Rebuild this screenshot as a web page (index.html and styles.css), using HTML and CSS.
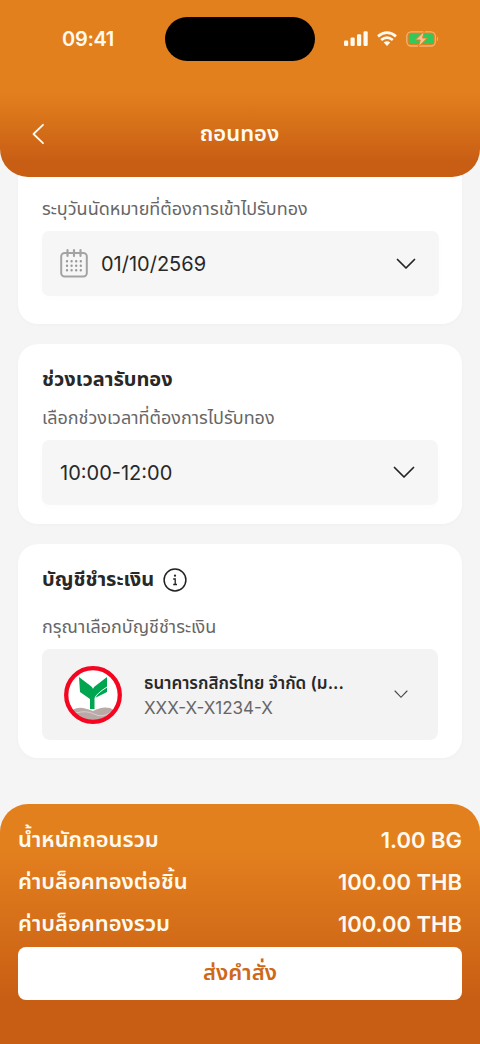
FILE: index.html
```html
<!DOCTYPE html>
<html lang="th">
<head>
<meta charset="utf-8">
<meta name="viewport" content="width=device-width, initial-scale=1">
<title>ถอนทอง</title>
<link rel="stylesheet" href="styles.css">
</head>
<body>
<div class="screen">
  <header class="header">
    <div class="status">
      <span class="clock">09:41</span>
      <div class="island"></div>
      <div class="status-icons">
        <svg width="24" height="16" viewBox="0 0 24 16" fill="#fffaf0"><rect x="0" y="9.5" width="4.2" height="5.5" rx="1.2"/><rect x="6.5" y="6.5" width="4.2" height="8.5" rx="1.2"/><rect x="13" y="3.3" width="4.2" height="11.7" rx="1.2"/><rect x="19.5" y="0.2" width="4.2" height="14.8" rx="1.2"/></svg>
        <svg width="20" height="16" viewBox="0 0 20 16"><g fill="none" stroke="#fffaf0" stroke-width="2.7"><path d="M1 5.4Q10-2.2 19 5.4"/><path d="M4.2 9Q10 4.2 15.8 9"/></g><path d="M6.7 11.6Q10 9 13.3 11.6L10 15Z" fill="#fffaf0"/></svg>
        <svg width="33" height="16" viewBox="0 0 33 16"><rect x=".8" y=".8" width="28.6" height="14.2" rx="4.5" fill="none" stroke="#f2b274" stroke-width="1.3"/><rect x="2.8" y="2.7" width="24.6" height="10.4" rx="2.8" fill="#34c759"/><path d="M31 5.5Q33.2 7.9 31 10.3Z" fill="#f2b274"/><path d="M18.5 0L9.4 9H14.2L12.3 16L21.4 7H16.6Z" fill="#f8c391" stroke="#e3801e" stroke-width="1"/></svg>
      </div>
    </div>
    <div class="nav">
      <svg class="back" width="14" height="22" viewBox="0 0 14 22"><path d="M12 1.8L2.5 11L12 20.2" fill="none" stroke="#fffaf0" stroke-width="1.8" stroke-linecap="round" stroke-linejoin="round"/></svg>
      <h1 class="nav-title"><span class="t-nav">ถอนทอง</span></h1>
    </div>
  </header>

  <main class="content">
    <section class="card">
      <h2 class="title"><span class="t-date">วันที่นัดหมาย</span></h2>
      <p class="hint"><span class="t-date-hint">ระบุวันนัดหมายที่ต้องการเข้าไปรับทอง</span></p>
      <div class="field field-wide">
        <svg class="calendar" width="28" height="29" viewBox="0 0 28 29"><rect x="1.2" y="4" width="25.6" height="23.5" rx="3.5" fill="none" stroke="#a3a3a3" stroke-width="2"/><path d="M7.5 1.2V7M14 1.2V7M20.5 1.2V7" stroke="#a3a3a3" stroke-width="2.2" stroke-linecap="round"/><path d="M7 12.2H22M7 16.7H22M7 21.2H22" stroke="#999" stroke-width="2.4" stroke-linecap="round" stroke-dasharray="0 4.6"/></svg>
        <span class="value v-date">01/10/2569</span>
        <svg class="chevron" width="20" height="12" viewBox="0 0 20 12"><path d="M1.5 1.5L10 10L18.5 1.5" fill="none" stroke="#222" stroke-width="1.7" stroke-linecap="round" stroke-linejoin="round"/></svg>
      </div>
    </section>

    <section class="card">
      <h2 class="title"><span class="t-time">ช่วงเวลารับทอง</span></h2>
      <p class="hint"><span class="t-time-hint">เลือกช่วงเวลาที่ต้องการไปรับทอง</span></p>
      <div class="field">
        <span class="value v-time">10:00-12:00</span>
        <svg class="chevron" width="22" height="13" viewBox="0 0 22 13"><path d="M1.5 1.5L11 11L20.5 1.5" fill="none" stroke="#222" stroke-width="1.7" stroke-linecap="round" stroke-linejoin="round"/></svg>
      </div>
    </section>

    <section class="card card-bank">
      <h2 class="title"><span class="t-bank">บัญชีชำระเงิน</span><svg class="info" width="24" height="24" viewBox="0 0 24 24"><circle cx="12" cy="12" r="10.9" fill="none" stroke="#222" stroke-width="1.5"/><circle cx="12" cy="7.7" r="1.1" fill="#222"/><path d="M10.2 11H12.2V16.3M10.2 16.5H14" fill="none" stroke="#222" stroke-width="1.3"/></svg></h2>
      <p class="hint hint-bank"><span class="t-bank-hint">กรุณาเลือกบัญชีชำระเงิน</span></p>
      <div class="account">
        <svg class="logo" width="58" height="58" viewBox="0 0 58 58"><circle cx="29" cy="29" r="26.5" fill="#fff"/><path d="M8 44Q14 41 19 42Q24 43 29 45Q38 40 46 42L50 44L44 51L34 55H22L13 50Z" fill="#b9aaa8"/><path d="M12 47Q22 44 30 48T46 47" fill="none" stroke="#d8cfcd" stroke-width="1"/><path d="M15 11L28 21Q29 24 30 21L43 11V26L31 32V43H26V33L16 26Z" fill="#00a54f"/><path d="M31 43V32Q32 28 43 21" fill="none" stroke="#fff" stroke-width="1"/><circle cx="29" cy="29" r="26.8" fill="none" stroke="#f5051f" stroke-width="4.3"/></svg>
        <div class="account-text">
          <div class="account-name"><span class="t-name">ธนาคารกสิกรไทย จำกัด (ม...</span></div>
          <div class="account-number"><span class="t-number">XXX-X-X1234-X</span></div>
        </div>
        <svg class="account-chevron" width="14" height="9" viewBox="0 0 14 9"><path d="M1 1L7 7.3L13 1" fill="none" stroke="#444" stroke-width="1.1" stroke-linecap="round"/></svg>
      </div>
    </section>
  </main>

  <footer class="summary">
    <div class="row"><span class="t-s1">น้ำหนักถอนรวม</span><span class="amount a-1">1.00 BG</span></div>
    <div class="row"><span class="t-s2">ค่าบล็อคทองต่อชิ้น</span><span class="amount">100.00 THB</span></div>
    <div class="row"><span class="t-s3">ค่าบล็อคทองรวม</span><span class="amount">100.00 THB</span></div>
    <button class="submit" type="button"><span class="t-submit">ส่งคำสั่ง</span></button>
  </footer>
</div>
</body>
</html>
```
FILE: styles.css
```css
* { box-sizing: border-box; margin: 0; padding: 0; }
body { background: #f5f5f5; }
svg { display: block; flex: none; }
.screen {
  width: 480px; height: 1044px; overflow: hidden;
  display: flex; flex-direction: column;
  background: #f5f5f5; color: #282828;
  font-family: Inter, "Noto Sans Thai", "Noto Sans", sans-serif;
  white-space: nowrap;
}
.header {
  position: relative; z-index: 1; flex: none; height: 177px;
  border-radius: 0 0 28px 28px;
  background: linear-gradient(#e3801e 0, #e3801e 92px, #c85e14 162px);
  color: #fffaf0;
}
.status { display: flex; align-items: center; height: 78px; padding-left: 62px; }
.clock { width: 103px; font-size: 20px; font-weight: 600; letter-spacing: -.3px; }
.island { width: 150px; height: 44px; border-radius: 22px; background: #000; }
.status-icons { display: flex; align-items: center; gap: 9px; margin-left: 29px; }
.nav { display: flex; align-items: center; height: 112px; padding-left: 31px; }
.nav { height: 112px; }
.nav-title { flex: 1; padding-right: 46px; text-align: center; font-size: 22px; font-weight: 600; }
.content { flex: none; display: flex; flex-direction: column; gap: 20px; margin: -42px 18px 0; height: 669px; }
.card {
  flex: none; height: 180px; padding: 20px 24px 0; background: #fff; border-radius: 20px;
  box-shadow: 0 1px 5px rgba(0, 0, 0, .025);
}
.card:first-child { height: 189px; }
.title { display: flex; align-items: center; gap: 9px; height: 32px; font-size: 20px; font-weight: 700; }
.hint { display: flex; align-items: center; height: 44px; font-size: 18px; color: #666; }
.field {
  display: flex; align-items: center; height: 65px; padding: 0 23px 0 18px;
  background: #f6f6f6; border-radius: 7px; box-shadow: 0 3px 10px rgba(0, 0, 0, .012);
}
.field-wide { margin-right: -1px; }
.calendar { margin-right: 13px; }
.value { font-size: 20px; }
.chevron { margin-left: auto; }
.card-bank { height: 214px; }
.hint-bank { height: 53px; padding-top: 10px; }
.account {
  display: flex; align-items: center; height: 91px; padding: 0 30px 0 22px;
  background: #f3f3f3; border-radius: 8px;
}
.account-text { margin-left: 22px; }
.account-name { height: 26px; line-height: 26px; font-size: 17px; font-weight: 600; }
.account-number { height: 24px; line-height: 24px; font-size: 17px; color: #666; }
.account-chevron { margin-left: auto; }
.summary {
  flex: none; height: 240px; padding: 15px 18px 0; border-radius: 28px 28px 0 0;
  background: linear-gradient(#e3801e 0, #e3801e 45px, #c85e14 195px);
  color: #fffaf0;
}
.row { display: flex; align-items: center; justify-content: space-between; height: 42px; font-size: 22px; font-weight: 600; }
.submit {
  display: flex; align-items: center; justify-content: center; width: 100%; height: 53px; margin-top: 2px;
  border: 0; border-radius: 8px; background: #fff; color: #cf6819;
  font: 600 22px Inter, "Noto Sans Thai", "Noto Sans", sans-serif;
}
```
